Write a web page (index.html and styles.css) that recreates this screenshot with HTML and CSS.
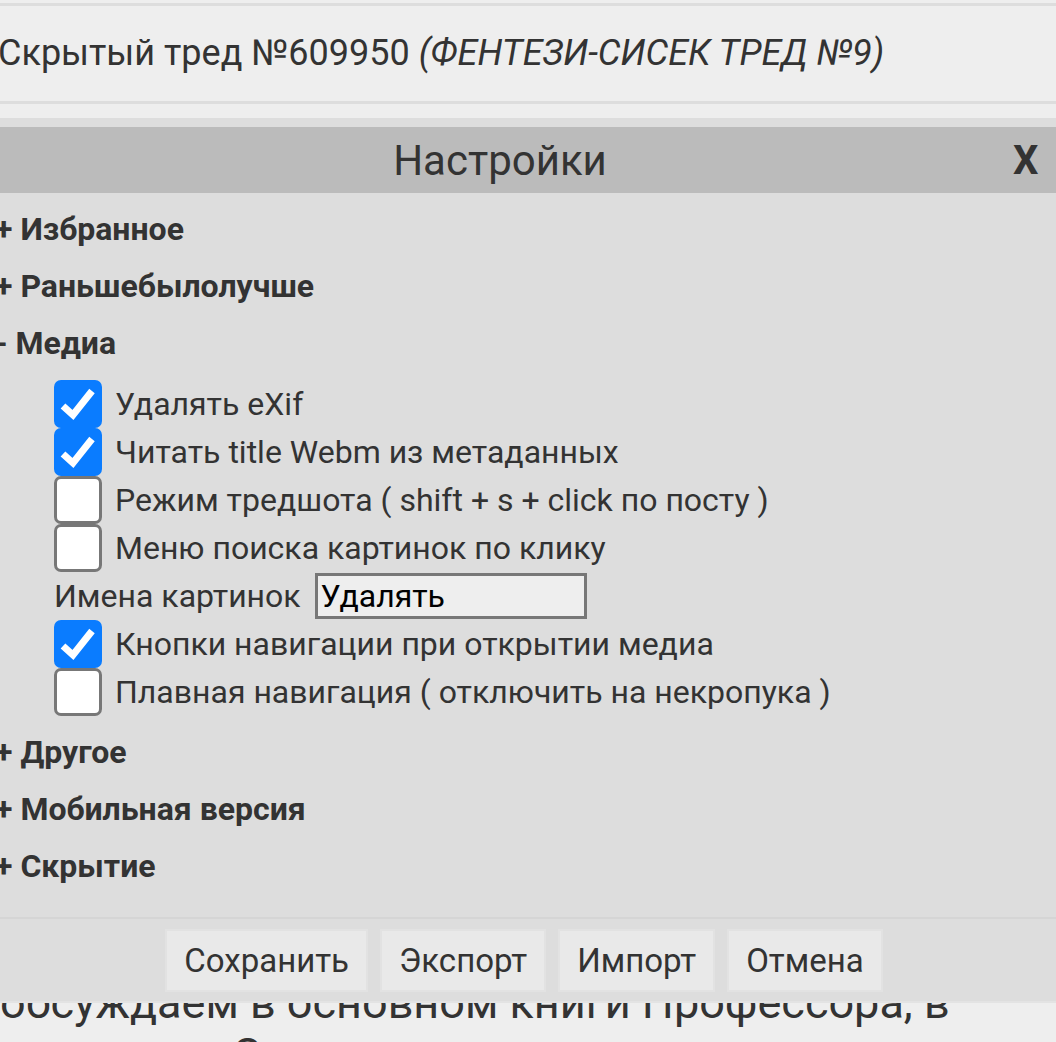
FILE: index.html
```html
<!DOCTYPE html>
<html lang="ru">
<head>
<meta charset="utf-8">
<link rel="stylesheet" href="styles.css">
</head>
<body>
<div class="page">
  <div class="thread">Скрытый тред №609950 <i>(ФЕНТЕЗИ-СИСЕК ТРЕД №9)</i></div>
  <div class="modal">
    <div class="modal-head">
      <div class="modal-title">Настройки</div>
      <div class="modal-close">X</div>
    </div>
    <div class="modal-body">
      <div class="section">+ Избранное</div>
      <div class="section">+ Раньшебылолучше</div>
      <div class="section">- Медиа</div>
      <div class="options">
        <label class="opt"><span class="cb on"><svg viewBox="0 0 48 48"><path d="M9 26 L19 35 L38 11"/></svg></span>Удалять eXif</label>
        <label class="opt"><span class="cb on"><svg viewBox="0 0 48 48"><path d="M9 26 L19 35 L38 11"/></svg></span>Читать title Webm из метаданных</label>
        <label class="opt"><span class="cb"></span>Режим тредшота ( shift + s + click по посту )</label>
        <label class="opt"><span class="cb"></span>Меню поиска картинок по клику</label>
        <div class="opt field">Имена картинок <span class="select">Удалять</span></div>
        <label class="opt"><span class="cb on"><svg viewBox="0 0 48 48"><path d="M9 26 L19 35 L38 11"/></svg></span>Кнопки навигации при открытии медиа</label>
        <label class="opt"><span class="cb"></span>Плавная навигация ( отключить на некропука )</label>
      </div>
      <div class="section">+ Другое</div>
      <div class="section">+ Мобильная версия</div>
      <div class="section">+ Скрытие</div>
    </div>
    <div class="modal-foot">
      <button class="btn">Сохранить</button>
      <button class="btn">Экспорт</button>
      <button class="btn">Импорт</button>
      <button class="btn">Отмена</button>
    </div>
  </div>
  <div class="post">обсуждаем в основном книги Профессора, в<br><span class="indent">Сильмариллионе</span></div>
</div>
</body>
</html>
```
FILE: styles.css
```css
html, body {
  margin: 0;
  padding: 0;
  background: #eeeeee;
  overflow: hidden;
  height: 1042px;
}
body {
  font-family: Roboto, "Noto Sans", sans-serif;
  color: #333333;
}
.page {
  width: 1056px;
  overflow: hidden;
  padding-top: 3px;
}
.thread {
  border-top: 3px solid #dddddd;
  border-bottom: 3px solid #dddddd;
  height: 95px;
  line-height: 94px;
  font-size: 36px;
  white-space: nowrap;
  margin-left: -2px;
}
.modal {
  margin-top: 14px;
  margin-left: -8px;
  width: 1064px;
  background: #dddddd;
  padding-top: 9px;
  position: relative;
  z-index: 2;
}
.modal-head {
  background: #bbbbbb;
  height: 66px;
  display: flex;
  align-items: center;
}
.modal-title {
  flex: 1;
  text-align: center;
  font-size: 42px;
}
.modal-close {
  width: 48px;
  font-size: 40px;
  font-weight: bold;
  text-align: left;
  padding-left: 5px;
  box-sizing: border-box;
}
.modal-body {
  padding-top: 8px;
  padding-bottom: 22px;
}
.section {
  font-weight: bold;
  font-size: 32px;
  line-height: 57px;
  padding-left: 3px;
  white-space: nowrap;
}
.options {
  padding: 8px 0 8px 62px;
}
.opt {
  display: flex;
  align-items: center;
  height: 48px;
  font-size: 32px;
  white-space: nowrap;
}
.cb {
  width: 48px;
  height: 48px;
  box-sizing: border-box;
  border-radius: 7px;
  background: #ffffff;
  border: 3px solid #777777;
  margin-right: 13px;
  flex: none;
}
.cb.on {
  background: #0a7cff;
  border: none;
}
.cb svg {
  width: 48px;
  height: 48px;
  display: block;
}
.cb svg path {
  fill: none;
  stroke: #ffffff;
  stroke-width: 7;
  stroke-linejoin: miter;
}
.select {
  margin-left: 14px;
  width: 272px;
  height: 46px;
  box-sizing: border-box;
  border: 3px solid #777777;
  background: #eeeeee;
  color: #000000;
  font-size: 32px;
  line-height: 40px;
  padding-left: 3px;
}
.modal-foot {
  border-top: 2px solid #d5d5d5;
  border-bottom: 2px solid #e3e3e3;
  display: flex;
  justify-content: center;
  gap: 12px;
  padding: 10px 0 9px 0;
}
.btn {
  font-family: Roboto, "Noto Sans", sans-serif;
  font-size: 33px;
  color: #333333;
  background: #e9e9e9;
  border: 2px solid #e2e2e2;
  height: 63px;
  padding: 0 17px;
  margin: 0;
}
.post {
  margin-top: -26px;
  font-size: 45px;
  line-height: 52px;
  white-space: nowrap;
  position: relative;
  z-index: 1;
}
.indent {
  padding-left: 232px;
}
```
